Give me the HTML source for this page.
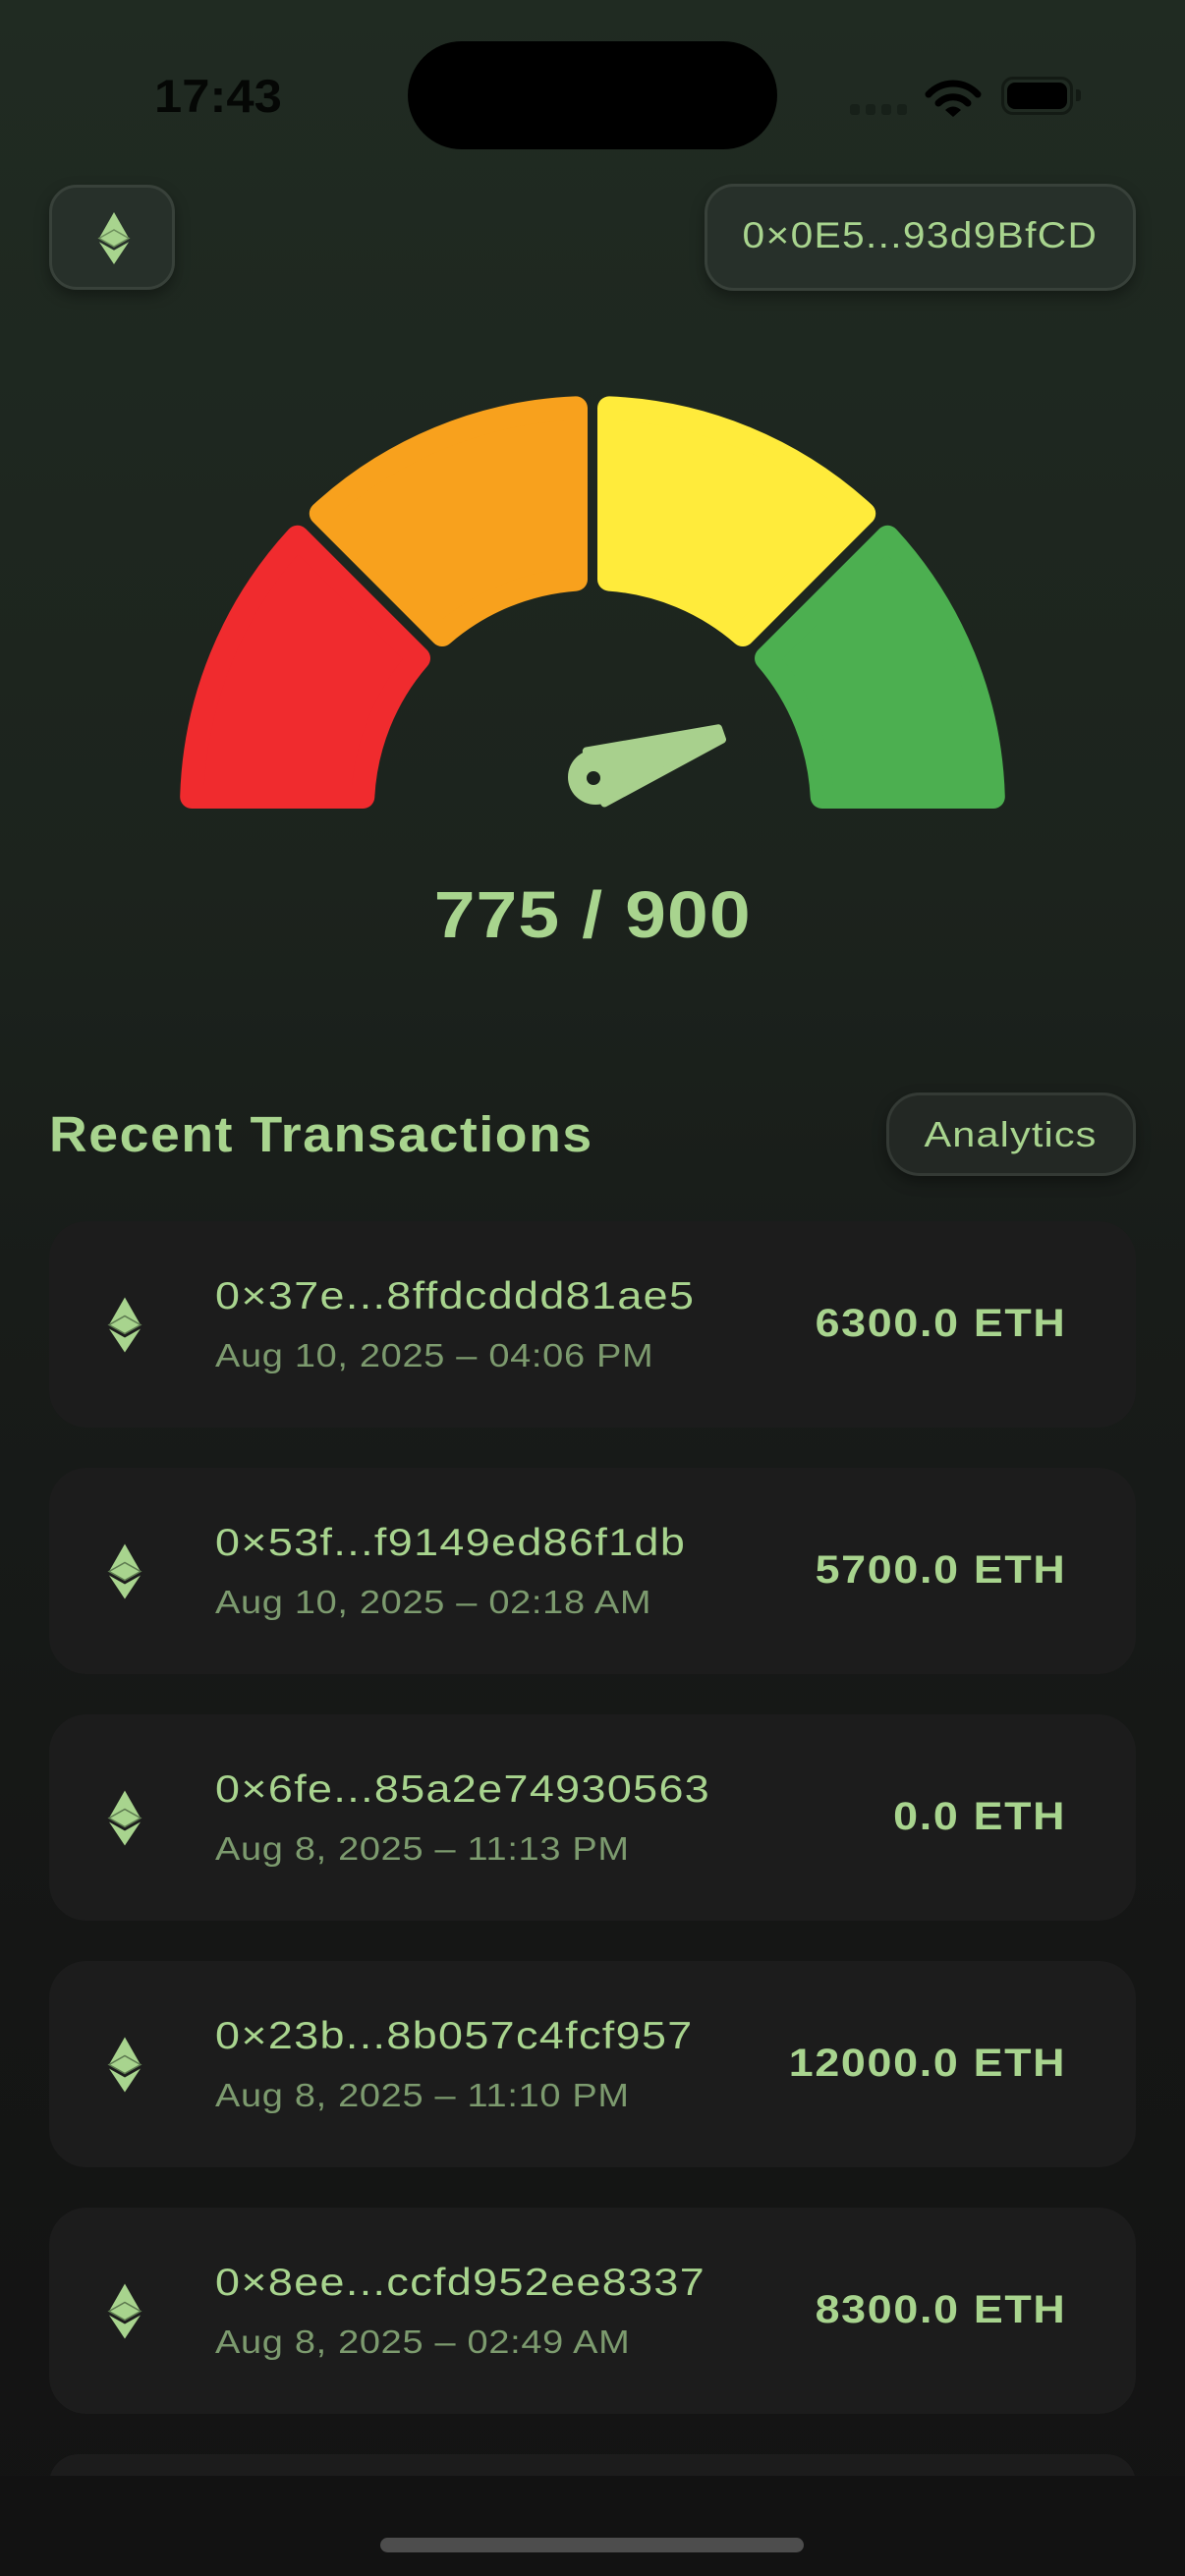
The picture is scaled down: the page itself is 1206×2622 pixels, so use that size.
<!DOCTYPE html>
<html><head><meta charset="utf-8"><style>
html,body{margin:0;padding:0}
body{width:1206px;height:2622px;overflow:hidden;position:relative;font-family:"Liberation Sans",sans-serif;
background:linear-gradient(180deg,#202b22 0px,#1c231d 900px,#181c19 1300px,#151615 2000px,#131313 2622px);}
.abs{position:absolute}
.sx{display:inline-block;white-space:nowrap}
.btn{position:absolute;background:#27302a;border:3px solid #38413a;border-radius:30px;box-sizing:border-box;box-shadow:0 6px 14px rgba(0,0,0,.35)}
.card{position:absolute;left:50px;width:1106px;height:210px;background:#1c1c1c;border-radius:38px}
.hash{position:absolute;left:169px;top:55px;font-size:39px;color:#a8d48e;letter-spacing:1.2px;white-space:nowrap;transform:scaleX(1.15);transform-origin:left center}
.date{position:absolute;left:169px;top:118px;font-size:33px;color:#7c9a6e;letter-spacing:.6px;white-space:nowrap;transform:scaleX(1.15);transform-origin:left center}
.amt{position:absolute;right:71px;top:82px;font-size:40px;font-weight:bold;color:#a8d48e;letter-spacing:1.5px;white-space:nowrap;transform:scaleX(1.12);transform-origin:right center}
.eic{position:absolute;left:59px;top:77px}
</style></head><body>
<!-- status bar -->
<div class="abs" style="left:157px;top:70px;font-size:47px;font-weight:bold;color:#050705;letter-spacing:0px;transform:scaleX(1.08);transform-origin:left center">17:43</div>
<div class="abs" style="left:415px;top:42px;width:376px;height:110px;background:#000;border-radius:55px"></div>
<div class="abs" style="left:865px;top:106px;width:10px;height:11px;background:#172019;border-radius:3px"></div>
<div class="abs" style="left:881px;top:106px;width:10px;height:11px;background:#172019;border-radius:3px"></div>
<div class="abs" style="left:897px;top:106px;width:10px;height:11px;background:#172019;border-radius:3px"></div>
<div class="abs" style="left:913px;top:106px;width:10px;height:11px;background:#172019;border-radius:3px"></div>
<svg class="abs" style="left:940px;top:74px" width="60" height="46" viewBox="0 0 60 46">
<path d="M5,22 A34,34 0 0 1 55,22" stroke="#000" stroke-width="7" fill="none" stroke-linecap="round"/>
<path d="M15,31 A21,21 0 0 1 45,31" stroke="#000" stroke-width="7" fill="none" stroke-linecap="round"/>
<path d="M22,38 L30,45 L38,38 A11,11 0 0 0 22,38Z" fill="#000"/>
</svg>
<div class="abs" style="left:1019px;top:78px;width:73px;height:39px;border:3px solid #131a14;border-radius:12px;box-sizing:border-box"></div>
<div class="abs" style="left:1025px;top:84px;width:61px;height:27px;background:#000;border-radius:8px"></div>
<div class="abs" style="left:1095px;top:91px;width:5px;height:12px;background:#131a14;border-radius:0 3px 3px 0"></div>

<!-- header buttons -->
<div class="btn" style="left:50px;top:188px;width:128px;height:107px;border-radius:28px">
<svg class="abs" style="left:46px;top:25px" width="34" height="53" viewBox="0 0 36 56">
<path d="M18,0 L34,28 L18,37 L2,28Z" fill="#a8d48e"/><path d="M2,28 L18,19 L34,28 L18,37Z" fill="none" stroke="#6d8f5c" stroke-width="1.5"/>
<path d="M2,32 L18,41 L34,32 L18,56Z" fill="#a8d48e"/></svg>
</div>
<div class="btn" style="left:717px;top:187px;width:439px;height:109px;border-radius:30px">
<div class="abs" style="left:0;width:433px;top:29px;text-align:center;font-size:37px;color:#a8d48e;letter-spacing:1.2px"><span class="sx" style="transform:scaleX(1.1)">0×0E5...93d9BfCD</span></div>
</div>

<!-- gauge -->
<svg class="abs" style="left:0;top:0" width="1206" height="1000" viewBox="0 0 1206 1000">
<g stroke-width="24" stroke-linejoin="round">
<path d="M195.2,811 A408,408 0 0 1 302.7,546.8 L426,670 A234,234 0 0 0 369.3,811 Z" fill="#f02b2e" stroke="#f02b2e"/>
<path d="M326.8,522.7 A408,408 0 0 1 586,415.4 L586,589.6 A234,234 0 0 0 450,646 Z" fill="#f8a11d" stroke="#f8a11d"/>
<path d="M620,415.4 A408,408 0 0 1 879.2,522.7 L756,646 A234,234 0 0 0 620,589.6 Z" fill="#ffeb3b" stroke="#ffeb3b"/>
<path d="M903.3,546.8 A408,408 0 0 1 1010.8,811 L836.7,811 A234,234 0 0 0 780,670 Z" fill="#4caf50" stroke="#4caf50"/>
</g>
<path d="M615.2,817.5 L735,752.7 L731,741.3 L596.8,764.5Z" fill="#a8d08d" stroke="#a8d08d" stroke-width="8" stroke-linejoin="round"/>
<circle cx="606" cy="791" r="28" fill="#a8d08d"/>
<circle cx="604" cy="792" r="7" fill="#1b231d"/>
</svg>
<div class="abs" style="left:0;width:1206px;top:893px;text-align:center;font-size:67px;font-weight:bold;color:#a8d48e;letter-spacing:1px"><span class="sx" style="transform:scaleX(1.12)">775 / 900</span></div>

<!-- recent -->
<div class="abs" style="left:50px;top:1125px;font-size:51px;color:#a8d48e;letter-spacing:1.5px;font-weight:bold;-webkit-text-stroke:0px;white-space:nowrap;transform:scaleX(1.05);transform-origin:left center">Recent Transactions</div>
<div class="btn" style="left:902px;top:1112px;width:254px;height:85px;border-radius:34px;background:#232824;border-color:#343a35">
<div class="abs" style="left:0;width:248px;top:19px;text-align:center;font-size:36px;color:#a8d48e;letter-spacing:1px"><span class="sx" style="transform:scaleX(1.15)">Analytics</span></div>
</div>

<div class="card" style="top:1243px">
<svg class="eic" width="36" height="57" viewBox="0 0 36 56"><path d="M18,0 L34,28 L18,37 L2,28Z" fill="#a8d48e"/><path d="M2,28 L18,19 L34,28 L18,37Z" fill="none" stroke="#5d7a50" stroke-width="1.5"/><path d="M2,32 L18,41 L34,32 L18,56Z" fill="#a8d48e"/></svg>
<div class="hash">0×37e...8ffdcddd81ae5</div><div class="date">Aug 10, 2025 – 04:06 PM</div><div class="amt">6300.0 ETH</div></div>
<div class="card" style="top:1494px">
<svg class="eic" width="36" height="57" viewBox="0 0 36 56"><path d="M18,0 L34,28 L18,37 L2,28Z" fill="#a8d48e"/><path d="M2,28 L18,19 L34,28 L18,37Z" fill="none" stroke="#5d7a50" stroke-width="1.5"/><path d="M2,32 L18,41 L34,32 L18,56Z" fill="#a8d48e"/></svg>
<div class="hash">0×53f...f9149ed86f1db</div><div class="date">Aug 10, 2025 – 02:18 AM</div><div class="amt">5700.0 ETH</div></div>
<div class="card" style="top:1745px">
<svg class="eic" width="36" height="57" viewBox="0 0 36 56"><path d="M18,0 L34,28 L18,37 L2,28Z" fill="#a8d48e"/><path d="M2,28 L18,19 L34,28 L18,37Z" fill="none" stroke="#5d7a50" stroke-width="1.5"/><path d="M2,32 L18,41 L34,32 L18,56Z" fill="#a8d48e"/></svg>
<div class="hash">0×6fe...85a2e74930563</div><div class="date">Aug 8, 2025 – 11:13 PM</div><div class="amt">0.0 ETH</div></div>
<div class="card" style="top:1996px">
<svg class="eic" width="36" height="57" viewBox="0 0 36 56"><path d="M18,0 L34,28 L18,37 L2,28Z" fill="#a8d48e"/><path d="M2,28 L18,19 L34,28 L18,37Z" fill="none" stroke="#5d7a50" stroke-width="1.5"/><path d="M2,32 L18,41 L34,32 L18,56Z" fill="#a8d48e"/></svg>
<div class="hash">0×23b...8b057c4fcf957</div><div class="date">Aug 8, 2025 – 11:10 PM</div><div class="amt">12000.0 ETH</div></div>
<div class="card" style="top:2247px">
<svg class="eic" width="36" height="57" viewBox="0 0 36 56"><path d="M18,0 L34,28 L18,37 L2,28Z" fill="#a8d48e"/><path d="M2,28 L18,19 L34,28 L18,37Z" fill="none" stroke="#5d7a50" stroke-width="1.5"/><path d="M2,32 L18,41 L34,32 L18,56Z" fill="#a8d48e"/></svg>
<div class="hash">0×8ee...ccfd952ee8337</div><div class="date">Aug 8, 2025 – 02:49 AM</div><div class="amt">8300.0 ETH</div></div>
<div class="card" style="top:2498px;height:60px"></div>
<div class="abs" style="left:0;top:2520px;width:1206px;height:102px;background:#121212"></div>
<div class="abs" style="left:387px;top:2583px;width:431px;height:15px;background:#4d4d4d;border-radius:8px"></div>
</body></html>
